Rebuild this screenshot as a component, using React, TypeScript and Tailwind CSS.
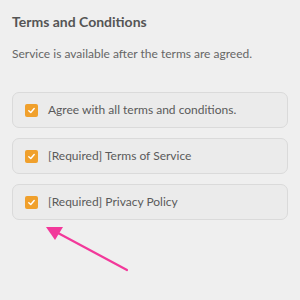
import React from "react";

const items = [
  "Agree with all terms and conditions.",
  "[Required] Terms of Service",
  "[Required] Privacy Policy",
];

const Check = () => (
  <span className="flex h-[13px] w-[13px] shrink-0 items-center justify-center rounded-[2px] bg-[#f0a02c]">
    <svg width="9" height="9" viewBox="0 0 10 10" fill="none">
      <path d="M2 5.2 L4.2 7.2 L8 2.8" stroke="#fff" strokeWidth="1.6" strokeLinecap="round" strokeLinejoin="round" />
    </svg>
  </span>
);

export default function App() {
  return (
    <div className="relative h-[300px] w-[300px] overflow-hidden bg-[#efefef] px-[12px] font-['Lato',sans-serif]">
      {/* HEADER */}
      <h1 className="pt-[11px] text-[14px] font-bold leading-[22px] text-[#555]">Terms and Conditions</h1>
      <p className="mt-[12px] text-[12px] leading-[18px] text-[#666]">Service is available after the terms are agreed.</p>

      {/* TERMS LIST */}
      <div className="mt-[29px] flex w-[276px] flex-col gap-[10px]">
        {items.map((label) => (
          <div key={label} className="flex h-[36px] items-center gap-[10px] rounded-[7px] border border-[#dadada] bg-[#ebebeb] pl-[12px]">
            <Check />
            <span className="text-[12px] text-[#5a5a5a]">{label}</span>
          </div>
        ))}
      </div>

      {/* ARROW */}
      <svg className="absolute left-0 top-0" width="300" height="300" viewBox="0 0 300 300">
        <line x1="127" y1="270" x2="58" y2="233" stroke="#f2389a" strokeWidth="2.2" strokeLinecap="round" />
        <polygon points="46,227 63,227 55,240" fill="#f2389a" />
      </svg>
    </div>
  );
}
